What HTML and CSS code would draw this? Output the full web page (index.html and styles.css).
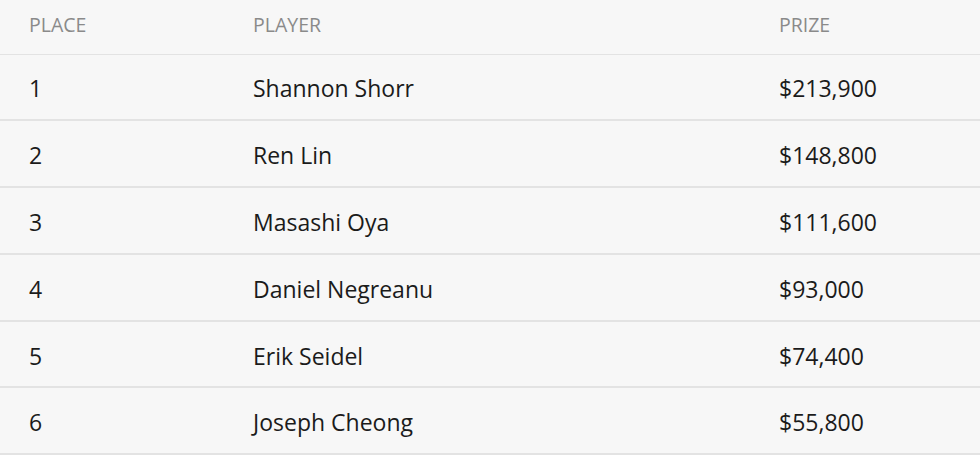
FILE: index.html
```html
<!DOCTYPE html>
<html>
<head>
<meta charset="utf-8">
<link rel="stylesheet" href="styles.css">
</head>
<body>
<div class="results">
  <div class="row head">
    <div class="c place">Place</div>
    <div class="c player">Player</div>
    <div class="c prize">Prize</div>
  </div>
  <div class="row"><div class="c">1</div><div class="c">Shannon Shorr</div><div class="c">$213,900</div></div>
  <div class="row"><div class="c">2</div><div class="c">Ren Lin</div><div class="c">$148,800</div></div>
  <div class="row"><div class="c">3</div><div class="c">Masashi Oya</div><div class="c">$111,600</div></div>
  <div class="row"><div class="c">4</div><div class="c">Daniel Negreanu</div><div class="c">$93,000</div></div>
  <div class="row"><div class="c">5</div><div class="c">Erik Seidel</div><div class="c">$74,400</div></div>
  <div class="row"><div class="c">6</div><div class="c">Joseph Cheong</div><div class="c">$55,800</div></div>
</div>
</body>
</html>
```

FILE: styles.css
```css
html, body {
  margin: 0;
  padding: 0;
  background: #ffffff;
}
.results {
  background: #f7f7f7;
  font-family: "Open Sans", "Liberation Sans", sans-serif;
  color: #1b1b1b;
}
.row {
  display: grid;
  grid-template-columns: 224px 526px 1fr;
  padding-left: 29px;
  height: 64.8px;
  align-items: center;
  border-bottom: 2px solid #e3e3e3;
  font-size: 23px;
}
.row .c {
  padding-top: 3px;
}
.row.head {
  height: 53.5px;
  border-bottom: 1.5px solid #e3e3e3;
  font-size: 19.5px;
  color: #8a8a8a;
  text-transform: uppercase;
}
.row.head .c {
  padding-top: 0;
  padding-bottom: 5px;
}
.c {
  white-space: nowrap;
}
```
